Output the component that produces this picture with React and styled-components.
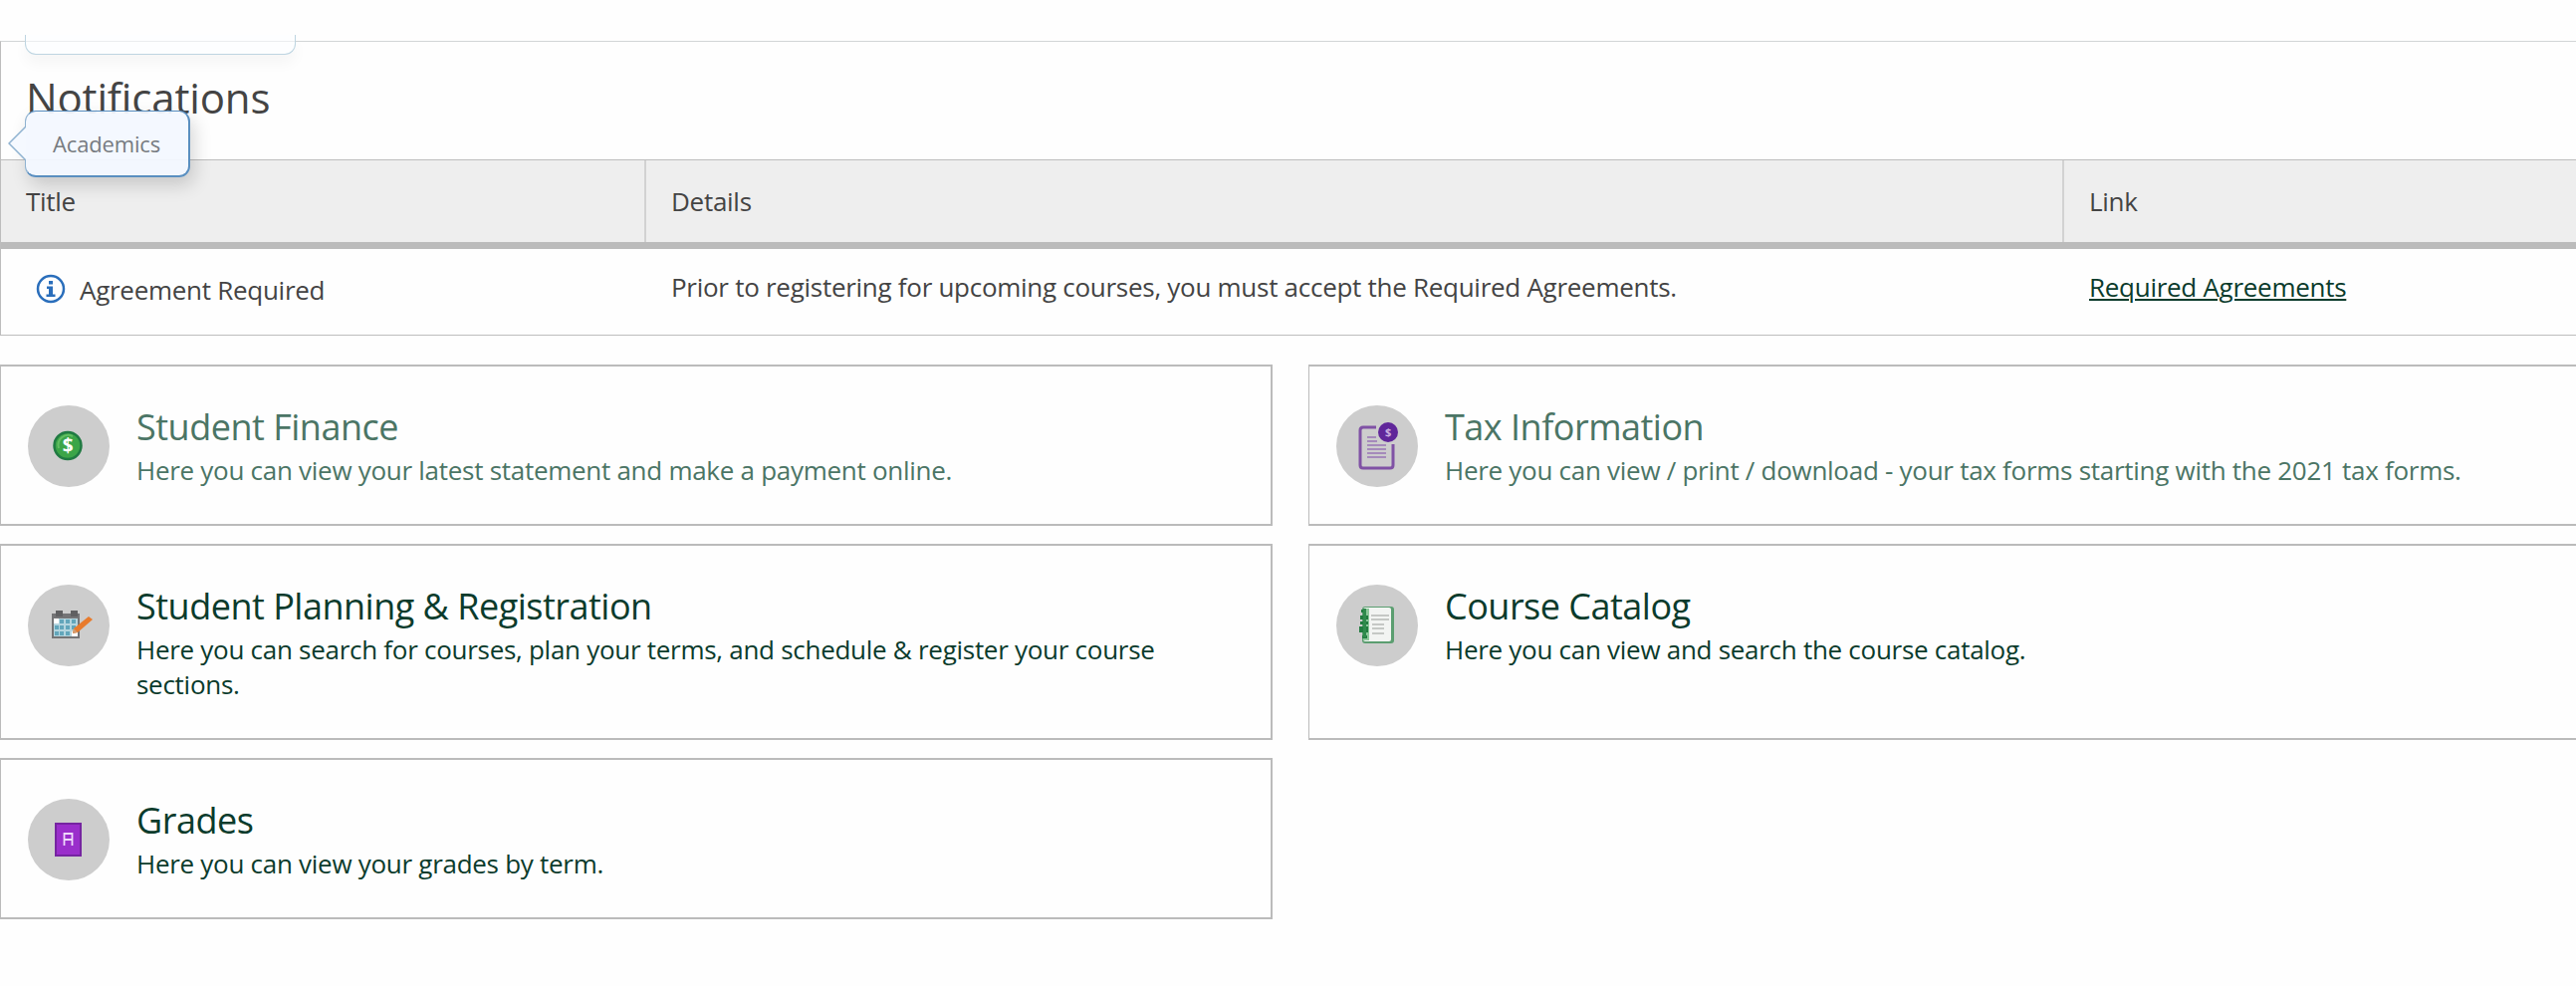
import React from 'react';
import styled, {createGlobalStyle} from 'styled-components';

const GlobalStyle = createGlobalStyle`
    * {
        box-sizing: border-box;
    }
    body {
        margin: 0;
        background: #fefefe;
        color: #444;
        font-family: 'Open Sans', 'Noto Sans', sans-serif;
        font-size: 26px;
        line-height: 35px;
        letter-spacing: -0.28px;
        overflow: hidden;
    }
`;

const cards = [
    {icon: 'finance', title: 'Student Finance', text: 'Here you can view your latest statement and make a payment online.', visited: true},
    {icon: 'tax', title: 'Tax Information', text: 'Here you can view / print / download - your tax forms starting with the 2021 tax forms.', visited: true},
    {icon: 'planning', title: 'Student Planning & Registration', text: 'Here you can search for courses, plan your terms, and schedule & register your course sections.'},
    {icon: 'catalog', title: 'Course Catalog', text: 'Here you can view and search the course catalog.'},
    {icon: 'grades', title: 'Grades', text: 'Here you can view your grades by term.'}
];

const Page = styled.div`
    position: relative;
    width: 2592px;
    height: 990px;
    padding-top: 41px;
`;

const Panel = styled.section`
    height: 296px;
    border: 1px solid #bdbdbd;
    border-top-color: #d2d5d6;
`;

const PanelTitle = styled.h1`
    margin: 0;
    height: 118px;
    padding: 30px 0 0 25px;
    font-size: 42px;
    font-weight: 400;
    line-height: 52px;
    letter-spacing: -0.15px;
`;

const TableRow = styled.div`
    display: grid;
    grid-template-columns: 648px 1424px 1fr;
    height: 86px;
`;

const HeadRow = styled(TableRow)`
    height: 90px;
    background: #eee;
    border-top: 1px solid #bdbdbd;
    border-bottom: 7px solid #bbb;
`;

const HeadCell = styled.div`
    padding: 24px 25px 0;
    border-right: 2px solid #d2d2d2;
    &:last-child{
        border-right: none;
    }
`;

const Cell = styled.div`
    display: flex;
    align-items: flex-start;
    padding: 21px 25px 0;
`;

const StatusCell = styled(Cell)`
    gap: 14px;
    padding: 24px 0 0 35px;
    svg {
        margin-top: 1px;
    }
`;

const RequiredLink = styled.a`
    color: #0b3b2c;
    text-decoration: underline;
    text-decoration-thickness: 2px;
    text-underline-offset: 2px;
`;

const CardGrid = styled.main`
    display: grid;
    grid-template-columns: 1278px 1278px;
    gap: 18px 36px;
    margin-top: 29px;
`;

const Card = styled.a`
    display: flex;
    gap: 27px;
    min-height: 162px;
    padding: 37px 80px 36px 27px;
    border: 2px solid #bbb;
    border-left-width: 1px;
    color: ${props => props.$visited ? '#4b7565' : '#0b3b2c'};
`;

const IconCircle = styled.div`
    flex: none;
    width: 82px;
    height: 82px;
    margin-top: 2px;
    border-radius: 50%;
    background: #cdcdcd;
`;

const CardTitle = styled.h2`
    margin: 0 0 2px;
    font-size: 36px;
    font-weight: 400;
    line-height: 48px;
    letter-spacing: -0.5px;
`;

const CardText = styled.p`
    margin: 0;
`;

const Tooltip = styled.div`
    position: absolute;
    left: 25px;
    top: 111px;
    width: 166px;
    height: 67px;
    padding: 16px 0 0 27px;
    border: 2px solid #5a8fc0;
    border-top-width: 1px;
    border-left: 1px solid #8fb2d0;
    border-radius: 11px;
    background: rgba(243, 248, 255, 0.94);
    box-shadow: 4px 8px 18px rgba(0, 0, 0, 0.16);
    color: #777b80;
    font-size: 22px;
    line-height: 32px;
    letter-spacing: -0.15px;
`;

const TooltipArrow = styled.svg`
    position: absolute;
    left: -18px;
    top: 13px;
`;

// lower end of the tooltip that is fading out
const FadingTooltip = styled.div`
    position: absolute;
    left: 25px;
    top: 35px;
    width: 272px;
    height: 20px;
    border: 1px solid #bed5e1;
    border-top: none;
    border-radius: 0 0 11px 11px;
    background: rgba(251, 254, 255, 0.6);
    box-shadow: 0 9px 14px rgba(0, 0, 0, 0.035);
`;

const InfoIcon = () => (
    <svg width="30" height="30" viewBox="0 0 30 30">
        <circle cx="15" cy="15" r="13" fill="none" stroke="#2a6ebb" strokeWidth="2.5"/>
        <path d="M13 7h4v3.5h-4zM11 12.5h6v8h2.5V23h-9v-2.5H13V15h-2z" fill="#2a6ebb"/>
    </svg>
);

const FinanceIcon = () => (
    <>
        <circle cx="40" cy="40.5" r="13.5" fill="#3ca548" stroke="#207a42" strokeWidth="2.5"/>
        <path d="M31 43a10 10 0 0 1 14-12" fill="none" stroke="#62bd62" strokeWidth="2"/>
        <text x="40" y="47" textAnchor="middle" fill="#fff" fontSize="19" fontWeight="700">$</text>
    </>
);

const TaxIcon = () => (
    <>
        <path d="M40 22H27q-3 0-3 3v35q0 3 3 3h27q3 0 3-3V39" fill="none" stroke="#8052a5" strokeWidth="3"/>
        <path d="M31 32h9M31 36h10M31 40h19M31 44h19M31 48h19M31 52h19" stroke="#a58abb" strokeWidth="1.8"/>
        <circle cx="52" cy="27" r="10" fill="#60269a"/>
        <text x="52" y="31" textAnchor="middle" fill="#c9aee0" fontSize="11" fontWeight="700">$</text>
    </>
);

const PlanningIcon = () => (
    <>
        <path d="M24 29h28v25H24z" fill="#747476"/>
        <path d="M28 26h7v6h-7zM43 26h7v6h-7z" fill="#606062"/>
        <path d="M26 34h24v18H26z" fill="#b4d5df"/>
        <path d="M32 35h4v4h-4zM38 35h4v4h-4zM44 35h4v4h-4zM27 41h4v4h-4zM32 41h4v4h-4zM38 41h4v4h-4zM44 41h4v4h-4zM27 47h4v4h-4zM32 47h4v4h-4zM38 47h4v4h-4z" fill="#62a6bb"/>
        <path d="M26 34h5v5h-5zM44 47h6v5h-6z" fill="#fff"/>
        <path d="M45 49l1-5 15-12 4 3-15 13z" fill="#e87b2d"/>
        <path d="M45 49l1-5 4 4z" fill="#d29c70"/>
    </>
);

const CatalogIcon = () => (
    <>
        <rect x="26" y="22" width="32" height="37" rx="3" fill="#5b9e70"/>
        <rect x="27" y="23" width="28" height="34" rx="2" fill="#f2f4f2"/>
        <path d="M27 24h6v32h-6z" fill="#8cc79a"/>
        <path d="M25 25h5v3h-5zM24 31h8v4h-8zM24 37h8v3h-8zM23 42h9v6h-9zM26 51h5v3h-5z" fill="#217c40"/>
        <path d="M27 24h3v29h-3z" fill="#2f8a4c"/>
        <path d="M35 31h18M35 35h18M36 40h12M36 44h12M36 49h12" stroke="#b6b9b7" strokeWidth="1.5"/>
    </>
);

const GradesIcon = () => (
    <>
        <path d="M28 25h25v32H28z" fill="#9a2ecb" stroke="#7624a1" strokeWidth="2"/>
        <path d="M36.5 47V35h8v12M36.5 41h8" fill="none" stroke="#eed8fa" strokeWidth="1.8"/>
    </>
);

const icons = {
    finance: FinanceIcon,
    tax: TaxIcon,
    planning: PlanningIcon,
    catalog: CatalogIcon,
    grades: GradesIcon
};

const CardLink = ({card}) => {
    const Icon = icons[card.icon];

    return (
        <Card $visited={card.visited}>
            <IconCircle>
                <svg width="82" height="82" viewBox="0 0 82 82"><Icon/></svg>
            </IconCircle>
            <div>
                <CardTitle>{card.title}</CardTitle>
                <CardText>{card.text}</CardText>
            </div>
        </Card>
    );
};

const App = () => (
    <Page>
        <GlobalStyle/>
        <Panel>
            <PanelTitle>Notifications</PanelTitle>
            <HeadRow>
                <HeadCell>Title</HeadCell>
                <HeadCell>Details</HeadCell>
                <HeadCell>Link</HeadCell>
            </HeadRow>
            <TableRow>
                <StatusCell><InfoIcon/>Agreement Required</StatusCell>
                <Cell>Prior to registering for upcoming courses, you must accept the Required Agreements.</Cell>
                <Cell><RequiredLink>Required Agreements</RequiredLink></Cell>
            </TableRow>
        </Panel>
        <CardGrid>
            {cards.map(card => <CardLink key={card.title} card={card}/>)}
        </CardGrid>
        <FadingTooltip/>
        <Tooltip>
            <TooltipArrow width="18" height="38" viewBox="0 0 18 38">
                <path d="M18 2L1 19l17 17" fill="#f5f9ff" stroke="#8fb2d0" strokeWidth="1.5"/>
            </TooltipArrow>
            Academics
        </Tooltip>
    </Page>
);

export default App;
